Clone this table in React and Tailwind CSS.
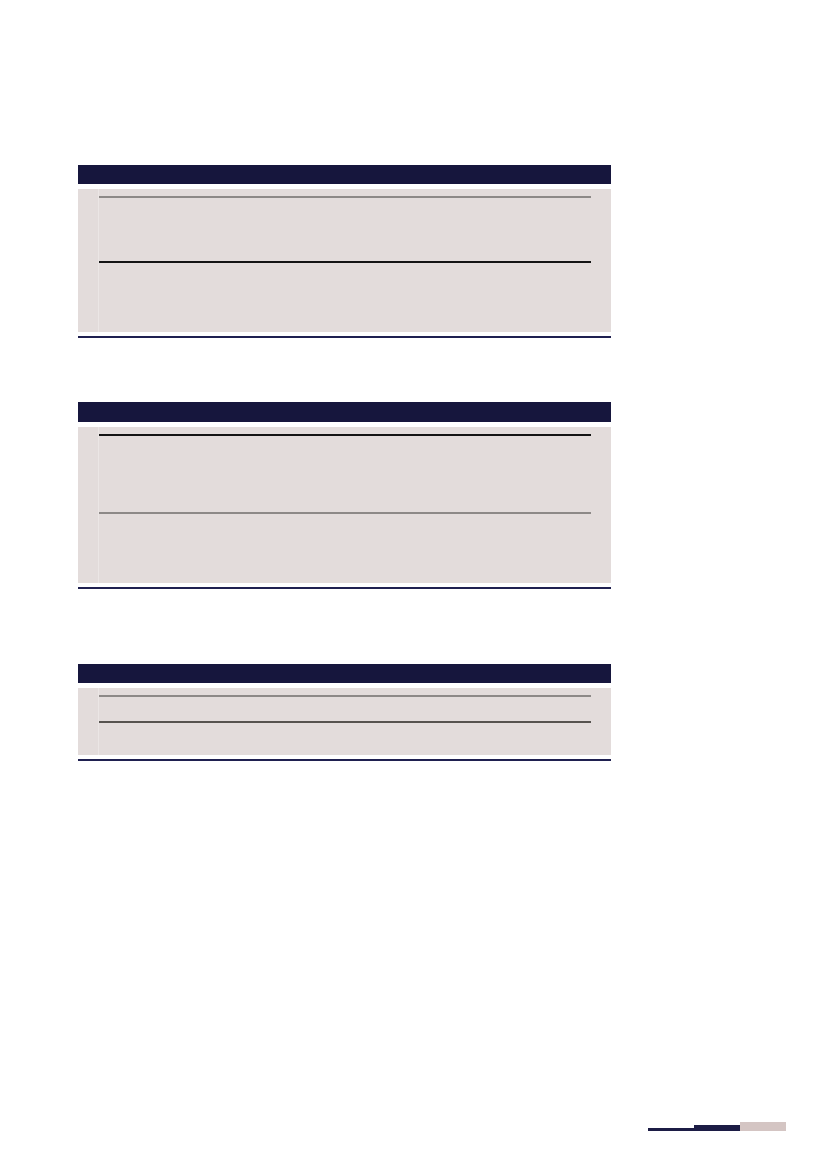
const tables = [
  {
    headerH: "h-[19px]",
    bodyH: "h-[143px]",
    gapAfter: "mt-[63px]",
    rows: [
      { before: "h-[7px]", line: "h-[2px] bg-[#8d8987]" },
      { before: "h-[63px]", line: "h-[2px] bg-[#141414]" },
    ],
  },
  {
    headerH: "h-[20px]",
    bodyH: "h-[156px]",
    gapAfter: "mt-[75px]",
    rows: [
      { before: "h-[7px]", line: "h-[2px] bg-[#141414]" },
      { before: "h-[76px]", line: "h-[2px] bg-[#8d8987]" },
    ],
  },
  {
    headerH: "h-[19px]",
    bodyH: "h-[67px]",
    gapAfter: "",
    rows: [
      { before: "h-[7px]", line: "h-[2px] bg-[#8d8987]" },
      { before: "h-[24px]", line: "h-[2px] bg-[#57534f]" },
    ],
  },
];

function BlankTable({ headerH, bodyH, rows }) {
  return (
    <div className="w-[533px]">
      <div className={`${headerH} bg-[#16163d]`} />
      <div className={`mt-[5px] ${bodyH} bg-[#e3dcdb] pl-[20px] pr-[20px]`}>
        <div className="flex h-full flex-col border-l border-[#ebe6e5]">
          {rows.map((row, i) => (
            <div key={i}>
              <div className={row.before} />
              <div className={row.line} />
            </div>
          ))}
        </div>
      </div>
      <div className="mt-[4px] h-[2px] bg-[#1f2050]" />
    </div>
  );
}

export default function App() {
  return (
    <div className="relative h-[1169px] w-[827px] bg-white">
      <div className="pl-[78px] pt-[165px]">
        <BlankTable {...tables[0]} />
        <div className="h-[64px]" />
        <BlankTable {...tables[1]} />
        <div className="h-[75px]" />
        <BlankTable {...tables[2]} />
      </div>
      <div className="absolute left-[648px] top-[1122px] flex items-end">
        <div className="h-[3px] w-[46px] bg-[#1c1c45]" />
        <div className="h-[6px] w-[46px] bg-[#1c1c45]" />
        <div className="h-[9px] w-[46px] bg-[#d4c5c3]" />
      </div>
    </div>
  );
}
